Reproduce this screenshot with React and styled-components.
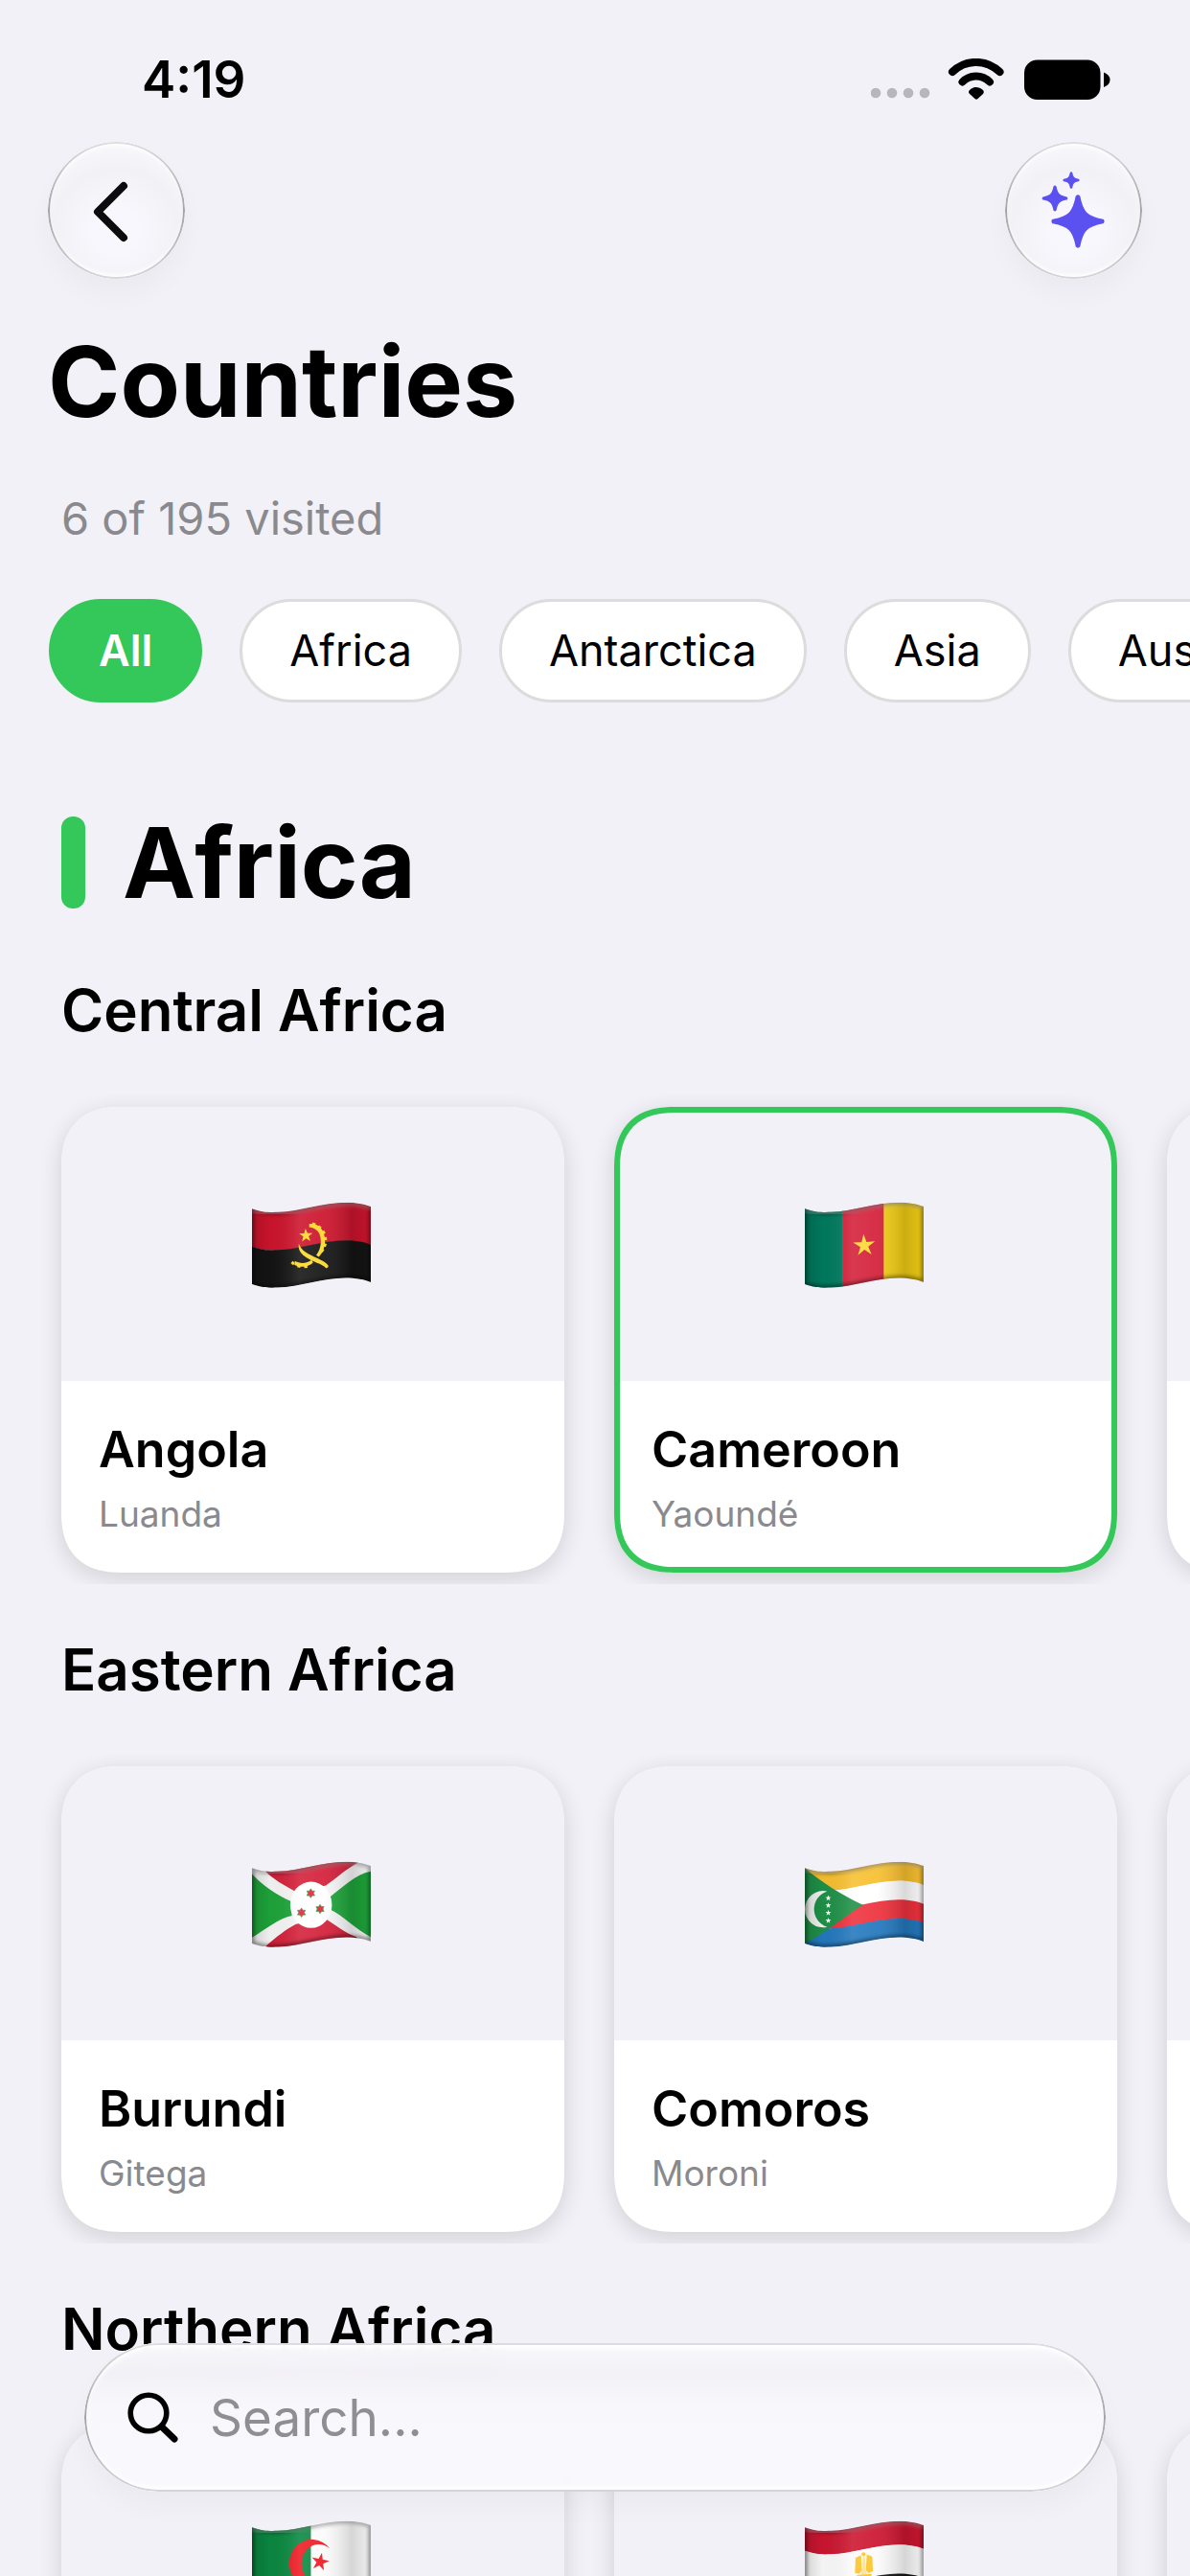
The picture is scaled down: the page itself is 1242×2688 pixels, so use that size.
import React, { useId, useState } from "react";
import styled, { createGlobalStyle } from "styled-components";

const color = {
  page: "#f2f1f7",
  card: "#ffffff",
  green: "#34c759",
  ink: "#000000",
  muted: "#8a8a8e",
  outline: "#dcdcdc",
  accent: "#5b50f0",
};

const GlobalStyle = createGlobalStyle`
  *, *::before, *::after { box-sizing: border-box; }
  body {
    margin: 0;
    background: ${color.page};
    color: ${color.ink};
    font-family: Inter, Roboto, "Liberation Sans", sans-serif;
  }
  button, input { font: inherit; color: inherit; }
  h1, h2, h3, h4, p { margin: 0; }
`;

const Screen = styled.div`
  height: 100vh;
  overflow-x: hidden;
  overflow-y: auto;
  scrollbar-width: none;
  background: ${color.page};
`;

const StatusBar = styled.div`
  display: flex;
  align-items: center;
  justify-content: space-between;
  height: 148px;
  padding: 18px 83px 0 148px;
`;

const Clock = styled.time`
  font-size: 53px;
  line-height: 64px;
  font-weight: 600;
`;

const Toolbar = styled.header`
  display: flex;
  justify-content: space-between;
  padding: 0 50px;
`;

const glassRing = `
  &::before {
    content: "";
    position: absolute;
    inset: 0;
    padding: 2px;
    border-radius: inherit;
    background: linear-gradient(#dedde2, #a3a2a7 50%, #d6d5da);
    mask: linear-gradient(#000 0 0) content-box exclude, linear-gradient(#000 0 0);
    pointer-events: none;
  }
`;

const GlassButton = styled.button`
  position: relative;
  display: grid;
  place-items: center;
  width: 143px;
  height: 143px;
  padding: 0;
  border: 0;
  border-radius: 50%;
  background: radial-gradient(circle at 50% 65%, #f8f7fd 20%, #f2f1f6 56%, #f8f8fc 78%);
  box-shadow:
    0 16px 28px rgba(0, 0, 0, 0.03),
    inset 0 4px 4px #ffffff,
    inset 0 -4px 4px #ffffff;
  ${glassRing}
`;

const PageTitle = styled.h1`
  padding: 45px 50px 0;
  font-size: 102px;
  line-height: 124px;
  font-weight: 700;
`;

const Progress = styled.p`
  padding: 53px 64px 0;
  font-size: 47px;
  line-height: 56px;
  color: ${color.muted};
`;

const Chips = styled.nav`
  display: flex;
  gap: 39px;
  padding: 56px 51px 0;
  overflow: hidden;
`;

const Chip = styled.button`
  flex: none;
  height: 108px;
  padding: 0 49px;
  border: 3px solid ${(p) => (p.$active ? color.green : color.outline)};
  border-radius: 54px;
  background: ${(p) => (p.$active ? color.green : color.card)};
  color: ${(p) => (p.$active ? "#ffffff" : color.ink)};
  font-size: 45px;
  line-height: 56px;
  font-weight: ${(p) => (p.$active ? 600 : 400)};
`;

const ContinentHeading = styled.h2`
  display: flex;
  align-items: center;
  gap: 39px;
  padding: 105px 64px 0;
  font-size: 102px;
  line-height: 124px;
  font-weight: 700;

  &::before {
    content: "";
    width: 25px;
    height: 96px;
    border-radius: 12px;
    background: ${color.green};
  }
`;

const Regions = styled.div`
  display: flex;
  flex-direction: column;
  gap: 53px;
  padding: 56px 0 280px;
`;

const Region = styled.section`
  display: flex;
  flex-direction: column;
  gap: 53px;
`;

const RegionTitle = styled.h3`
  padding: 0 64px;
  font-size: 60px;
  line-height: 72px;
  font-weight: 600;
`;

const CardRow = styled.div`
  display: flex;
  gap: 52px;
  padding: 12px 64px;
  overflow: hidden;
`;

const Card = styled.article`
  position: relative;
  flex: none;
  width: 525px;
  border-radius: 54px;
  background: ${color.card};
  box-shadow: 0 6px 24px rgba(0, 0, 0, 0.14);

  &::after {
    content: "";
    position: absolute;
    inset: 0;
    border: ${(p) => (p.$visited ? `6px solid ${color.green}` : "0")};
    border-radius: inherit;
    pointer-events: none;
  }

  @supports (corner-shape: superellipse(1.3)) {
    &,
    &::after {
      border-radius: 64px;
      corner-shape: superellipse(1.3);
    }
  }
`;

const CardTop = styled.div`
  display: grid;
  place-items: center;
  height: 286px;
  padding: 2px 3px 0 0;
  border-radius: 54px 54px 0 0;
  background: ${color.page};

  @supports (corner-shape: superellipse(1.3)) {
    border-radius: 64px 64px 0 0;
    corner-shape: superellipse(1.3);
  }
`;

const CardBody = styled.div`
  display: flex;
  flex-direction: column;
  gap: 12px;
  padding: 40px 39px 38px;
  white-space: nowrap;
`;

const CountryName = styled.h4`
  font-size: 52px;
  line-height: 64px;
  font-weight: 600;
`;

const Capital = styled.p`
  font-size: 37px;
  line-height: 46px;
  color: ${color.muted};
`;

const SearchBar = styled.label`
  position: fixed;
  left: 88px;
  right: 88px;
  bottom: 88px;
  display: flex;
  align-items: center;
  gap: 31px;
  height: 155px;
  padding: 0 44px;
  border-radius: 78px;
  background: linear-gradient(
    rgba(248, 248, 252, 0.95),
    rgba(242, 241, 246, 0.95) 20%,
    rgba(247, 247, 252, 0.95) 45%,
    rgba(248, 248, 253, 0.95)
  );
  backdrop-filter: blur(20px);
  box-shadow:
    0 16px 28px rgba(0, 0, 0, 0.03),
    inset 0 5px 5px #ffffff,
    inset 0 -5px 5px #ffffff;
  ${glassRing}
`;

const SearchInput = styled.input`
  flex: 1;
  min-width: 0;
  padding: 0;
  border: 0;
  outline: 0;
  background: transparent;
  font-size: 53px;
  line-height: 66px;

  &::placeholder {
    color: #8e8e93;
    opacity: 1;
  }
`;

function StatusIcons() {
  return (
    <svg width="250" height="44" viewBox="909 61 250 44" aria-hidden="true">
      <g fill="#b7b6bb">
        {[914, 931, 948, 965].map((x) => (
          <circle key={x} cx={x} cy="97" r="5.3" />
        ))}
      </g>
      <g fill="none" stroke="#000" strokeWidth="8" strokeLinecap="round">
        <path d="M994 75 C1008 61.500 1029 61.500 1043.500 75" />
        <path d="M1004.500 85.500 C1012.500 77.500 1025 77.500 1033 85.500" />
      </g>
      <path d="M1012 94 C1016 90 1021.500 90 1026 94 Q1027.500 96 1026 98 L1020.500 103 Q1019 104.300 1017.500 103 L1012 98 Q1010 96 1012 94Z" />
      <rect x="1069" y="62.500" width="79.500" height="41.500" rx="13.500" />
      <path d="M1152 75.500 Q1158.500 78 1158.500 83.200 T1152 91Z" />
    </svg>
  );
}

function Chevron() {
  return (
    <svg width="50" height="66" viewBox="0 0 50 66" aria-hidden="true">
      <path
        d="M32 7 L5 34 L32 61"
        fill="none"
        stroke="#0c0c0e"
        strokeWidth="8"
        strokeLinecap="round"
        strokeLinejoin="round"
      />
    </svg>
  );
}

function sparkle(cx, cy, r) {
  const t = r * 0.06;
  const a = r * 0.18;
  const k = r * 0.36;
  return [
    `M${cx - t} ${cy - r}`,
    `Q${cx} ${cy - r - t} ${cx + t} ${cy - r}`,
    `C${cx + a} ${cy - k} ${cx + k} ${cy - a} ${cx + r} ${cy - t}`,
    `Q${cx + r + t} ${cy} ${cx + r} ${cy + t}`,
    `C${cx + k} ${cy + a} ${cx + a} ${cy + k} ${cx + t} ${cy + r}`,
    `Q${cx} ${cy + r + t} ${cx - t} ${cy + r}`,
    `C${cx - a} ${cy + k} ${cx - k} ${cy + a} ${cx - r} ${cy + t}`,
    `Q${cx - r - t} ${cy} ${cx - r} ${cy - t}`,
    `C${cx - k} ${cy - a} ${cx - a} ${cy - k} ${cx - t} ${cy - r}Z`,
  ].join(" ");
}

function Sparkles() {
  return (
    <svg width="72" height="84" viewBox="0 0 72 84" aria-hidden="true">
      <g fill={color.accent} stroke={color.accent} strokeWidth="1.6" strokeLinejoin="round">
        <path d={sparkle(40, 53, 26)} />
        <path d={sparkle(16, 29, 12.3)} />
        <path d={sparkle(33, 10, 7.6)} />
      </g>
    </svg>
  );
}

function Magnifier() {
  return (
    <svg width="56" height="56" viewBox="0 0 56 56" aria-hidden="true">
      <g fill="none" stroke="#000" strokeLinecap="round">
        <circle cx="23" cy="23" r="18.800" strokeWidth="5.600" />
        <path d="M37.500 38 L50 50" strokeWidth="7" />
      </g>
    </svg>
  );
}

/* Flags share one waving outline, 370 by 268 units. */
const rightward = (y) =>
  `0 ${21 + y} C30 ${32 + y} 52 ${33 + y} 80 ${32 + y} C150 ${30 + y} 220 ${2 + y} 292 ${2 + y} C322 ${2 + y} 350 ${7 + y} 370 ${15 + y}`;
const leftward = (y) =>
  `370 ${15 + y} C350 ${7 + y} 322 ${2 + y} 292 ${2 + y} C220 ${2 + y} 150 ${30 + y} 80 ${32 + y} C52 ${33 + y} 30 ${32 + y} 0 ${21 + y}`;
const band = (from, to) => `M${rightward(from)} L${leftward(to)}Z`;
const outline = band(0, 235);

function star(cx, cy, r, points = 5, inner = 0.4, turn = 0) {
  const out = [];
  for (let i = 0; i < points * 2; i += 1) {
    const d = i % 2 ? r * inner : r;
    const a = (Math.PI * i) / points - Math.PI / 2 + turn;
    out.push(`${(cx + d * Math.cos(a)).toFixed(1)},${(cy + d * Math.sin(a)).toFixed(1)}`);
  }
  return out.join(" ");
}

function gearTeeth(cx, cy, r, angles) {
  return angles.map((deg) => {
    const a = (deg * Math.PI) / 180;
    return (
      <rect
        key={deg}
        x={-4.5}
        y={-5}
        width="9"
        height="10"
        transform={`translate(${cx + r * Math.cos(a)} ${cy + r * Math.sin(a)}) rotate(${deg})`}
      />
    );
  });
}

const flags = {
  angola: (
    <>
      <path d={band(0, 119)} fill="#cc142c" />
      <path d={band(118, 235)} fill="#141414" />
      <g fill="#fcd92c">
        <path d="M178 69 C205 66 226 84 227 118 C228 142 219 160 208 171 L200 166 C210 153 216 136 214 116 C212 94 200 82 178 79Z" />
        {gearTeeth(176, 120, 53, [-72, -50, -28, -6, 16, 36])}
        <path d="M134 184 C150 194 172 192 186 180 L190 190 C174 204 150 206 132 196Z" />
        {gearTeeth(160, 149, 53, [128, 105, 82])}
        <path d="M146 130 C152 152 176 162 204 176 C216 182 234 190 238 200 Q238 207 230 206 C222 196 206 192 194 186 C170 174 140 160 146 130Z" />
        <polygon points={star(168, 105, 22, 5, 0.4, -0.05)} />
      </g>
    </>
  ),
  cameroon: (
    <>
      <rect width="119" height="268" fill="#007a5e" />
      <rect x="118" width="129" height="268" fill="#d4203a" />
      <rect x="246" width="124" height="268" fill="#f0cc14" />
      <polygon points={star(185, 136, 36, 5, 0.36, -0.06)} fill="#fdd835" />
    </>
  ),
  burundi: (
    <>
      <rect width="370" height="268" fill="#f6f6f6" />
      <path d="M0 40 C34 76 78 106 124 126 L124 170 C80 180 40 214 0 238Z" fill="#1ea43a" />
      <path d="M370 32 C322 40 280 84 242 112 L242 150 C284 168 320 212 370 236Z" fill="#1ea43a" />
      <path d="M38 27 C66 58 104 76 137 95 L230 76 C262 54 296 22 334 3 L334 -9 L38 -9Z" fill="#d4203a" />
      <path d="M44 264 C76 236 106 212 137 196 L230 180 C258 196 290 224 326 236 L326 275 L44 275Z" fill="#d4203a" />
      <ellipse cx="184" cy="136" rx="65" ry="72" fill="#ffffff" />
      <g fill="#e0283c" stroke="#2a9a3e" strokeWidth="2.500">
        <polygon points={star(183, 100, 14, 6, 0.6)} />
        <polygon points={star(154, 160, 14, 6, 0.6)} />
        <polygon points={star(212, 149, 14, 6, 0.6)} />
      </g>
    </>
  ),
  comoros: (
    <>
      <path d={band(0, 60)} fill="#f8c030" />
      <path d={band(59, 119)} fill="#ffffff" />
      <path d={band(118, 178)} fill="#ee323e" />
      <path d={band(177, 236)} fill="#2478be" />
      <path d="M0 21 C50 64 120 108 181 136 C130 168 70 220 0 256Z" fill="#1f9148" />
      <path d="M70 94 A57 57 0 1 0 70 205 A58 58 0 0 1 70 94Z" fill="#f4f4f4" />
      <g fill="#ffffff">
        {[115, 138, 161, 185].map((y) => (
          <polygon key={y} points={star(73, y, 9.5)} />
        ))}
      </g>
    </>
  ),
  algeria: (
    <>
      <rect width="184" height="268" fill="#0a8840" />
      <rect x="184" width="186" height="268" fill="#fbfbfb" />
      <path d="M243 88 A71 75 0 1 0 243 180 A54 60 0 1 1 243 88Z" fill="#ee1c25" />
      <polygon points={star(212, 129, 29, 5, 0.38, 0.2)} fill="#ee1c25" />
    </>
  ),
  egypt: (
    <>
      <path d={band(0, 74)} fill="#cc1630" />
      <path d={band(73, 164)} fill="#fbfbfb" />
      <path d={band(163, 236)} fill="#141414" />
      <g fill="#fcc42c">
        <path d="M158 116 L175 108 L178 156 L170 166 L156 164Z" />
        <path d="M210 112 L193 106 L190 154 L198 164 L212 158Z" />
        <path d="M180 120 L184 106 L188 120 L188 146 L194 168 L174 170 L180 146Z" fill="#fbe29a" />
        <circle cx="183" cy="105" r="6" />
        <path d="M162 170 L208 166 L206 178 L164 180Z" />
      </g>
    </>
  ),
};

function Flag({ name, label }) {
  const id = useId();
  const clip = `${id}-clip`;
  const fold = `${id}-fold`;
  const blur = `${id}-blur`;
  return (
    <svg width="124" height="90" viewBox="0 0 370 268" role="img" aria-label={label}>
      <defs>
        <clipPath id={clip}>
          <path d={outline} />
        </clipPath>
        <linearGradient id={fold}>
          <stop offset="0" stopColor="#000" stopOpacity="0.16" />
          <stop offset="0.15" stopColor="#000" stopOpacity="0.03" />
          <stop offset="0.4" stopColor="#fff" stopOpacity="0.11" />
          <stop offset="0.6" stopColor="#fff" stopOpacity="0.07" />
          <stop offset="0.84" stopColor="#000" stopOpacity="0.15" />
          <stop offset="1" stopColor="#000" stopOpacity="0.04" />
        </linearGradient>
        <filter id={blur} x="-10%" y="-10%" width="120%" height="120%">
          <feGaussianBlur stdDeviation="6" />
        </filter>
      </defs>
      <g clipPath={`url(#${clip})`}>
        {flags[name]}
        <rect width="370" height="268" fill={`url(#${fold})`} />
        <path d={outline} fill="none" stroke="#000" strokeOpacity="0.55" strokeWidth="11" filter={`url(#${blur})`} />
        <path d={`M${rightward(3)}`} fill="none" stroke="#fff" strokeOpacity="0.4" strokeWidth="9" filter={`url(#${blur})`} />
      </g>
    </svg>
  );
}

const continents = ["All", "Africa", "Antarctica", "Asia", "Australia"];

const regions = [
  {
    title: "Central Africa",
    countries: [
      { name: "Angola", capital: "Luanda", flag: "angola" },
      { name: "Cameroon", capital: "Yaoundé", flag: "cameroon", visited: true },
      { name: "Chad", capital: "N’Djamena" },
    ],
  },
  {
    title: "Eastern Africa",
    countries: [
      { name: "Burundi", capital: "Gitega", flag: "burundi" },
      { name: "Comoros", capital: "Moroni", flag: "comoros" },
      { name: "Djibouti", capital: "Djibouti" },
    ],
  },
  {
    title: "Northern Africa",
    countries: [
      { name: "Algeria", capital: "Algiers", flag: "algeria" },
      { name: "Egypt", capital: "Cairo", flag: "egypt" },
      { name: "Libya", capital: "Tripoli" },
    ],
  },
];

function CountryCard({ country }) {
  return (
    <Card $visited={country.visited}>
      <CardTop>{country.flag && <Flag name={country.flag} label={`Flag of ${country.name}`} />}</CardTop>
      <CardBody>
        <CountryName>{country.name}</CountryName>
        <Capital>{country.capital}</Capital>
      </CardBody>
    </Card>
  );
}

export default function App() {
  const [active, setActive] = useState("All");
  const [query, setQuery] = useState("");

  return (
    <Screen>
      <GlobalStyle />
      <StatusBar>
        <Clock>4:19</Clock>
        <StatusIcons />
      </StatusBar>
      <Toolbar>
        <GlassButton type="button" aria-label="Back">
          <Chevron />
        </GlassButton>
        <GlassButton type="button" aria-label="Suggestions">
          <Sparkles />
        </GlassButton>
      </Toolbar>
      <main>
        <PageTitle>Countries</PageTitle>
        <Progress>6 of 195 visited</Progress>
        <Chips aria-label="Continents">
          {continents.map((name) => (
            <Chip key={name} type="button" $active={name === active} onClick={() => setActive(name)}>
              {name}
            </Chip>
          ))}
        </Chips>
        <ContinentHeading>Africa</ContinentHeading>
        <Regions>
          {regions.map((region) => (
            <Region key={region.title}>
              <RegionTitle>{region.title}</RegionTitle>
              <CardRow>
                {region.countries.map((country) => (
                  <CountryCard key={country.name} country={country} />
                ))}
              </CardRow>
            </Region>
          ))}
        </Regions>
      </main>
      <SearchBar>
        <Magnifier />
        <SearchInput
          type="text"
          aria-label="Search countries"
          placeholder="Search..."
          value={query}
          onChange={(event) => setQuery(event.target.value)}
        />
      </SearchBar>
    </Screen>
  );
}
